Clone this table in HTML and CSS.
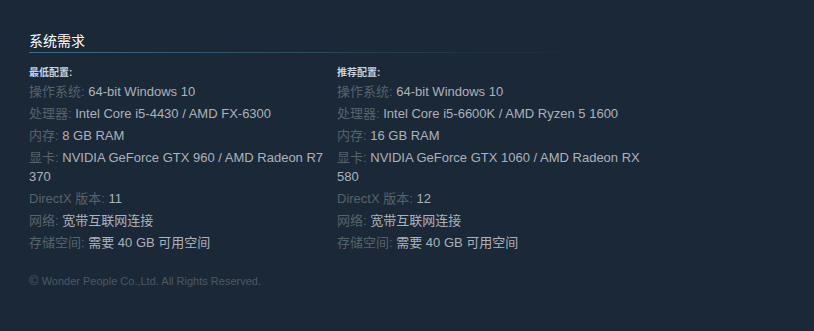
FILE: index.html
```html
<!DOCTYPE html>
<html lang="zh-CN">
<head>
<meta charset="utf-8">
<link rel="stylesheet" href="styles.css">
</head>
<body>
<div class="wrap">
  <h2 class="title">系统需求</h2>
  <div class="cols">
    <div class="col">
      <div class="head">最低配置:</div>
      <ul class="reqs">
        <li><span class="lab">操作系统:</span> 64-bit Windows 10</li>
        <li><span class="lab">处理器:</span> Intel Core i5-4430 / AMD FX-6300</li>
        <li><span class="lab">内存:</span> 8 GB RAM</li>
        <li><span class="lab">显卡:</span> NVIDIA GeForce GTX 960 / AMD Radeon R7 370</li>
        <li><span class="lab">DirectX 版本:</span> 11</li>
        <li><span class="lab">网络:</span> 宽带互联网连接</li>
        <li><span class="lab">存储空间:</span> 需要 40 GB 可用空间</li>
      </ul>
    </div>
    <div class="col">
      <div class="head">推荐配置:</div>
      <ul class="reqs">
        <li><span class="lab">操作系统:</span> 64-bit Windows 10</li>
        <li><span class="lab">处理器:</span> Intel Core i5-6600K / AMD Ryzen 5 1600</li>
        <li><span class="lab">内存:</span> 16 GB RAM</li>
        <li><span class="lab">显卡:</span> NVIDIA GeForce GTX 1060 / AMD Radeon RX 580</li>
        <li><span class="lab">DirectX 版本:</span> 12</li>
        <li><span class="lab">网络:</span> 宽带互联网连接</li>
        <li><span class="lab">存储空间:</span> 需要 40 GB 可用空间</li>
      </ul>
    </div>
  </div>
  <p class="legal"><span class="copy">©</span> Wonder People Co.,Ltd. All Rights Reserved.</p>
</div>
</body>
</html>
```
FILE: styles.css
```css
html, body {
  margin: 0;
  padding: 0;
  background: #1b2838;
}
body {
  font-family: "Liberation Sans", Arial, "Noto Sans CJK SC", sans-serif;
  color: #acb2b8;
  font-size: 13px;
}
.wrap {
  padding: 31px 0 0 29px;
  width: 616px;
}
.title {
  margin: 0;
  font-size: 14px;
  font-weight: normal;
  color: #ffffff;
  line-height: 20px;
  padding-bottom: 1px;
  width: 560px;
  border-bottom: 1px solid transparent;
  border-image: linear-gradient(to right, #3b6e8c 0%, rgba(59,110,140,0.35) 60%, rgba(59,110,140,0) 100%) 1;
}
.cols {
  display: flex;
  gap: 2px;
  margin-top: 14px;
}
.col {
  width: 306px;
}
.head {
  font-size: 10px;
  font-weight: bold;
  color: #c6d4df;
  line-height: 12px;
  margin-bottom: 3px;
}
.reqs {
  list-style: none;
  margin: 0;
  padding: 0;
}
.reqs li {
  line-height: 19px;
  margin-bottom: 3px;
}
.lab {
  color: #56626d;
}
.legal {
  margin: 20px 0 0;
  font-size: 11px;
  color: #4b5865;
}
.copy {
  font-size: 13px;
  line-height: 11px;
}
```
